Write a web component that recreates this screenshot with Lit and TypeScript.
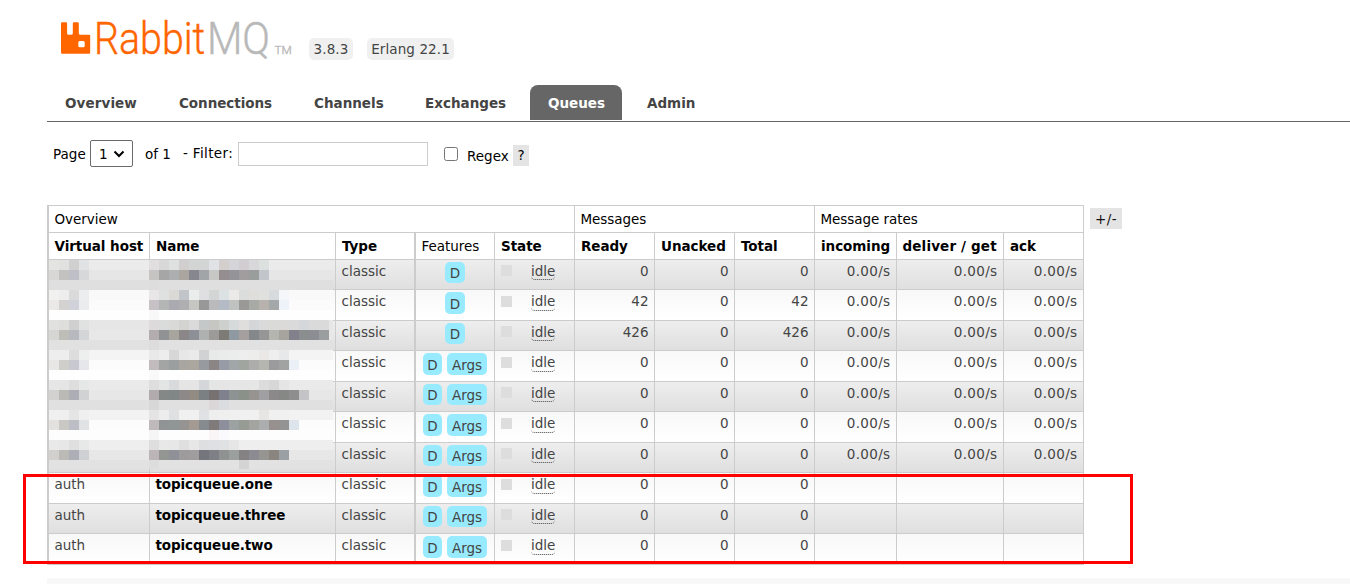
import { LitElement, html, css, svg } from "lit";
import { customElement } from "lit/decorators.js";

interface Queue {
  vhost?: string;
  name?: string;
  args: boolean;
  ready: string;
  total: string;
  rate: string;
}

const QUEUES: Queue[] = [
  { args: false, ready: "0", total: "0", rate: "0.00/s" },
  { args: false, ready: "42", total: "42", rate: "0.00/s" },
  { args: false, ready: "426", total: "426", rate: "0.00/s" },
  { args: true, ready: "0", total: "0", rate: "0.00/s" },
  { args: true, ready: "0", total: "0", rate: "0.00/s" },
  { args: true, ready: "0", total: "0", rate: "0.00/s" },
  { args: true, ready: "0", total: "0", rate: "0.00/s" },
  { vhost: "auth", name: "topicqueue.one", args: true, ready: "0", total: "0", rate: "" },
  { vhost: "auth", name: "topicqueue.three", args: true, ready: "0", total: "0", rate: "" },
  { vhost: "auth", name: "topicqueue.two", args: true, ready: "0", total: "0", rate: "" },
];

// One entry per 10px band: background, virtual-host blocks, name blocks.
const BANDS: [string, string, string][] = [
  ["ebebeb", "e4e4e2 e1e1e0 d0d0d1 e1e2e4", "e0dedf d8d8d8 dee1e0 d0cfcd d3d4d4 d3d5d5 e0e2e5 d3cfcc d5d5d9 d1ced1 d8d8db dce0df"],
  ["e6e6e6", "d8d7d5 c4c2c0 bfc0c7 d7d8da", "c5c4c3 a6a6a6 abafb0 aaa69f 87878f a2a5a8 c7c8c6 948e90 949398 a19d9f 999d9c c2c6ca"],
  ["dfdfdf", "", "dddddd"],
  ["f9f9f9", "f1f1f0 ededed dadadb ecedef", "e8e6e7 dfe1e0 dad9d6 c1c4c8 ebecec dfdfe2 d4d5d5 dce1e3 ebeae9 dadddc dfdeda e0e0df d8dbde f5f6f9"],
  ["fbfbfb", "eae9e7 d3d2d0 d0d1d9 ebecee", "c6c1c4 b4b6b5 abaab0 afafb2 c6c7c2 989899 bab9bb b4bbc4 c0c1c1 9a9998 a8aaa6 b7b2ad a4a8a8 eef2f9"],
  ["fefefe", "", "f8f8f8"],
  ["e6e6e6", "e1e1df dededd d0d0d0 e0e1e1", "dcdadb dadcdb d9d9d8 d3d3d2 dadada c5c8c8 c6c7c3 ced0cd d7dadb dfdedd d5d6d7 dadada dadbd9 dcdad9 d9dad9 d6d7db dadadb dadada"],
  ["e8e8e8", "d6d6d4 bfbdb8 b8b9bf d4d5d7", "b4adb0 909394 a8a59f 8b8687 8d9096 afb1b1 9d9b99 7c7b75 8e99a1 a59f9e 84888b 979696 b4b5ae a6a49c 82808a 8b8e8e 8d8e93 9a9e9e"],
  ["e1e1e1", "", "dddddd"],
  ["f4f4f4", "eeeeee ededed dddddd edeeee", "eae9ea ededed d7d7d8 e7e7e7 eaeaea d0d2d4 e8e9e9 eaebeb ebecec edeeed ededec e9e8e6 eeeeef e6e8ea"],
  ["fcfcfc", "e8e7e5 cfcecb c8c9d0 e6e7ea", "c2bbbe a2a5a4 9b9fa0 a9a5a0 aba69e 979ba0 8b8585 979ba5 a1a7a8 a0a59f adadab b6b6b0 9b9a9d a0a3a2 eaf0f5"],
  ["fefefe", "", "f9f9f9"],
  ["eaeaea", "e6e6e6 e5e5e5 dedede e6e7e7", "dfdedf e3e4e4 d9dadc e5e5e5 e5e5e5 d5d6d8 e4e5e5 e5e5e6 e6e6e6 e6e6e6 e6e6e6 dddcdd d7d7d8 e5e5e6"],
  ["e7e7e7", "d2d1cf bab9b5 acadb5 d1d2d4", "b2abae 848887 818687 8c8988 918b84 7b8083 787171 7f828e 8d9393 899188 969391 a0a0a3 8b898a 858884 8d8e8d c4c4c6"],
  ["e0e0e0", "", "d8d8d9 e0e0e0 e0e0e0 e0e0e0 e0e0e0 e0e0e0 dbd7d8 dbdcdf"],
  ["f2f2f2", "f0f0f0 efefef e5e5e6 efefef", "e5e4e5 ededed dfe0e2 f0f0f0 f0f0f0 dfe1e4 eeeeee efefef f0f0f0 f0f0f0 f0f0f0 e6e5e4 f0f0f0 f0f0f0"],
  ["fcfcfc", "e2e1df c9c8c4 bcbdc5 e1e2e4", "c0b9bc 909494 909596 969393 a39a94 868b8f 807b7a 8d8f9c 9ca1a1 969c93 a3a4a0 acadaf 96908e 939393 dde4eb"],
  ["fdfdfd", "", "f5f5f5 fdfdfd fdfdfd fdfdfd fdfdfd fdfdfd f9f5f7 fafafc"],
  ["eeeeee", "e9e9e9 e7e7e7 dfdfe0 e7e8e8", "dedede e8e8e8 e7e7e8 dfdfe0 e7e7e7 dedfe1 dfe0e3 e0e1e3 e6e6e7"],
  ["e7e7e7", "d1d0ce bbbab7 adaeb6 cfd0d3", "bbb5b7 939692 909099 9e9b9c a09d9e 75767d 7d8186 8e9290 9b9f9d 858283 8c8b92 979592 8b8580 9aa0a4"],
  ["e2e2e2", "", "dddddd e2e2e2 e2e2e2 e2e2e2 e2e2e2 e2e2e2 e2e2e2 e2e2e2 e2e2e2 d4d4d4"],
];

@customElement("app-root")
export class AppRoot extends LitElement {
  static styles = css`
    :host {
      display: block;
      position: relative;
      width: 1350px;
      height: 584px;
      overflow: hidden;
      background: #fff;
      color: #444;
      font: 13.5px/16px "DejaVu Sans", Verdana, sans-serif;
      white-space: nowrap;
    }
    * { box-sizing: border-box; }
    header { display: flex; height: 85px; padding-left: 60px; }
    .logo { width: 235px; height: 64px; margin-right: 14px; flex: none; }
    .version {
      height: 22px; margin: 38px 14px 0 0; line-height: 22px;
      border-radius: 5px; background: #f0f0f0; text-align: center; letter-spacing: 0.1px;
    }
    .v1 { width: 44px; }
    .v2 { width: 87px; }
    nav {
      display: flex; gap: 7px; height: 37px; margin-left: 47px;
      border-bottom: 1px solid #666;
    }
    .tab { height: 35px; padding-left: 18px; font-weight: 700; line-height: 36px; }
    .t0 { width: 107px; letter-spacing: 0.1px; } .t1 { width: 128px; letter-spacing: -0.05px; } .t2 { width: 104px; }
    .t3 { width: 116px; } .t4 { width: 92px; } .t5 { width: 84px; }
    .active { background: #666; color: #fff; border-radius: 8px 8px 0 0; }
    .filter { display: flex; height: 83px; padding: 18px 0 0 53px; color: #000; }
    .page { width: 37px; padding-top: 6px; }
    .select {
      display: flex; align-items: center; width: 43px; height: 27px; padding-left: 8px;
      border: 1px solid #6b6b6b; border-radius: 2px;
    }
    .select svg { width: 12px; height: 8px; margin-left: 5px; }
    .of { width: 50px; padding: 6px 0 0 12px; }
    .flabel { width: 55px; padding-top: 5px; letter-spacing: 0.35px; }
    .input { width: 190px; height: 24px; margin-top: 2px; border: 1px solid #ccc; }
    .check {
      width: 14px; height: 14px; margin: 7px 9px 0 16px;
      border: 1px solid #767676; border-radius: 2.5px;
    }
    .regex { width: 46px; padding-top: 8px; }
    .help {
      width: 16px; height: 21px; margin-top: 5px; line-height: 21px;
      background: #e4e4e4; text-align: center;
    }
    .listing { display: flex; gap: 6px; padding-left: 47px; }
    .grid {
      display: grid; width: 1037px;
      grid-template-columns: 102px 186px 79px 80px 80px 80px 80px 80px 82px 107px 80px;
      grid-template-rows: 27px 27px 30px 31px 30px 31px 30px 31px 30px 31px 30px 31px;
      border: solid #ccc; border-width: 0 1px 1px 0;
    }
    .cell { border: solid #ccc; border-width: 1px 0 0 1px; padding: 3px 5.5px 0 5.5px; }
    .first, .feat { border-left-width: 2px; }
    .group, .head { color: #000; padding-top: 5px; }
    .span5 { grid-column: span 5; }
    .span3 { grid-column: span 3; }
    .group { letter-spacing: -0.05px; }
    .head { font-weight: 700; padding-left: 6px; letter-spacing: -0.05px; }
    .head.first { padding-left: 5.5px; }
    .slash { letter-spacing: 0.15px; padding-left: 5.5px; }
    .plain { font-weight: 400; padding-left: 5.5px; }
    .dark { background: linear-gradient(#eee, #dfdfdf); }
    .light { background: linear-gradient(#f8f8f8, #fff); }
    .num { text-align: right; }
    .rate { letter-spacing: 0.35px; }
    .qname { color: #000; font-weight: 700; letter-spacing: -0.1px; }
    .center { display: flex; justify-content: center; gap: 5px; padding: 2px 0 0; }
    .pill {
      width: 20px; height: 22px; line-height: 24px; border-radius: 5px;
      background: #98ebff; text-align: center;
    }
    .dark .pill { height: 21px; line-height: 23px; }
    .narrow { width: 19px; }
    .wide { width: 40px; }
    .state { display: flex; padding-top: 3px; padding-left: 6px; }
    .square { width: 11px; height: 11px; margin: 2px 19px 0 0; background: #ddd; }
    .light .square { margin-top: 3px; }
    .idle { height: 17px; border-bottom: 1px dotted #444; border-radius: 4px; }
    .light .idle { height: 18px; }
    .toggle {
      width: 32px; height: 21px; margin-top: 3px; line-height: 22px;
      background: #e4e4e4; color: #111; text-align: center; letter-spacing: 0.5px;
    }
    .mosaic { position: absolute; left: 49px; top: 260px; width: 284px; height: 209px; }
    .marker {
      position: absolute; left: 23px; top: 474px; width: 1110px; height: 90px;
      border: 3px solid #f00;
    }
    footer { height: 6px; margin: 13px 0 0 47px; background: #f8f8f8; }
  `;

  private mosaic() {
    const blocks = (list: string, x: number, y: number) =>
      list
        .split(" ")
        .filter(Boolean)
        .map((c, i) => svg`<rect x=${x + i * 10} y=${y} width="10" height="10" fill=${"#" + c} />`);
    return html`<svg class="mosaic" viewBox="0 0 284 209" shape-rendering="crispEdges">
      ${BANDS.map(
        ([bg, host, name], i) => svg`
          <rect x="0" y=${i * 10} width="284" height="10" fill=${"#" + bg} />
          ${blocks(host, 0, i * 10)}${blocks(name, 100, i * 10)}`
      )}
    </svg>`;
  }

  private row(q: Queue, i: number) {
    const s = i % 2 ? "light" : "dark";
    return html`
      <div class="cell first ${s}">${q.vhost ?? ""}</div>
      <div class="cell qname ${s}">${q.name ?? ""}</div>
      <div class="cell ${s}">classic</div>
      <div class="cell feat center ${s}">
        <span class="pill ${q.args ? "narrow" : ""}">D</span>
        ${q.args ? html`<span class="pill wide">Args</span>` : ""}
      </div>
      <div class="cell state ${s}"><span class="square"></span><span class="idle">idle</span></div>
      <div class="cell num ${s}">${q.ready}</div>
      <div class="cell num ${s}">0</div>
      <div class="cell num ${s}">${q.total}</div>
      ${[0, 1, 2].map(() => html`<div class="cell num rate ${s}">${q.rate}</div>`)}
    `;
  }

  render() {
    const tabs = ["Overview", "Connections", "Channels", "Exchanges", "Queues", "Admin"];
    const heads = ["Virtual host", "Name", "Type", "Features", "State", "Ready", "Unacked", "Total", "incoming", "deliver / get", "ack"];
    const headClass: Record<number, string> = { 0: "first", 3: "feat plain", 9: "slash" };
    return html`
      <header>
        <svg class="logo" viewBox="60 0 235 64">
          <path fill="#f60" fill-rule="evenodd" d="M62.2 22.3h3.7q1.2 0 1.2 1.2v9.7q0 1.6 1.6 1.6h2.5q1.6 0 1.6-1.6v-9.7q0-1.2 1.2-1.2h3.6q1.2 0 1.2 1.2v9.7q0 1.6 1.6 1.6h8.6q1.2 0 1.2 1.2v16.5q0 1.2-1.2 1.2H62.2q-1.2 0-1.2-1.2V23.5q0-1.2 1.2-1.2zM79.8 41q-1.5 0-1.5 1.5v3.2q0 1.5 1.5 1.5h3.4q1.5 0 1.5-1.5v-3.2q0-1.5-1.5-1.5z" />
          <g font-family="Roboto, sans-serif" font-weight="300" font-size="43.5" stroke-width="0.4">
            <text transform="translate(94 53.5) scale(0.905 1)" fill="#f60" stroke="#f60">Rabbit</text>
            <text transform="translate(207 53.5) scale(0.94 1)" fill="#b8b8b8" stroke="#b8b8b8">MQ</text>
            <text transform="translate(274.500 53.5) scale(1.03 1)" font-size="11.5" fill="#b8b8b8" stroke="#b8b8b8">TM</text>
          </g>
        </svg>
        <span class="version v1">3.8.3</span>
        <span class="version v2">Erlang 22.1</span>
      </header>
      <nav>${tabs.map((t, i) => html`<span class="tab t${i} ${t === "Queues" ? "active" : ""}">${t}</span>`)}</nav>
      <div class="filter">
        <span class="page">Page</span>
        <span class="select">1<svg viewBox="0 0 12 8"><path d="M1.5 1.5 6 6l4.5-4.5" fill="none" stroke="#000" stroke-width="2" /></svg></span>
        <span class="of">of 1</span>
        <span class="flabel">- Filter:</span>
        <span class="input"></span>
        <span class="check"></span>
        <span class="regex">Regex</span>
        <span class="help">?</span>
      </div>
      <div class="listing">
        <div class="grid">
          <div class="cell group first span5">Overview</div>
          <div class="cell group span3">Messages</div>
          <div class="cell group span3">Message rates</div>
          ${heads.map((h, i) => html`<div class="cell head ${headClass[i] ?? ""}">${h}</div>`)}
          ${QUEUES.map((q, i) => this.row(q, i))}
        </div>
        <span class="toggle">+/-</span>
      </div>
      <footer></footer>
      ${this.mosaic()}
      <div class="marker"></div>
    `;
  }
}
